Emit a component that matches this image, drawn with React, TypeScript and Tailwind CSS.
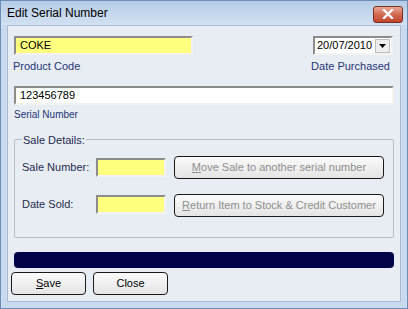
const inputSunken =
  "border-2 border-t-[#8c8c8c] border-l-[#8c8c8c] border-b-[#f2f2f2] border-r-[#f2f2f2]"

const Btn: React.FC<{ hot: string; rest: string; disabled?: boolean; w: string }> = ({
  hot,
  rest,
  disabled,
  w,
}) => (
  <div
    className={`${w} h-[23px] rounded-[4px] border border-[#1a1a1a] bg-gradient-to-b from-[#fbfbfb] to-[#e4e4e4] flex items-center justify-center text-[11px] ${
      disabled ? "text-[#8f8f8f]" : "text-black"
    }`}
  >
    <span className="underline">{hot}</span>
    <span>{rest}</span>
  </div>
)

export default function App() {
  return (
    <div
      className="w-[408px] h-[309px] bg-[#c9daee] border border-[#6f8db3] flex flex-col"
      style={{ fontFamily: '"Liberation Sans", Arial, sans-serif' }}
    >
      {/* title bar */}
      <div className="h-[24px] shrink-0 flex items-center justify-between pl-[6px] pr-[4px] bg-gradient-to-b from-[#b6cce7] to-[#d2e1f2]">
        <span className="text-[12px] text-black">Edit Serial Number</span>
        <div className="w-[30px] h-[17px] mt-[2px] rounded-[3px] border border-[#7a2e24] bg-gradient-to-b from-[#e9a898] via-[#d36a52] to-[#c2452c] flex items-center justify-center">
          <svg width="12" height="10" viewBox="0 0 12 10">
            <path d="M2 1 L10 9 M10 1 L2 9" stroke="#fff" strokeWidth="2.4" strokeLinecap="square" />
          </svg>
        </div>
      </div>

      {/* client */}
      <div className="mx-[6px] mb-[6px] flex-1 bg-[#e8edf3] border border-[#a9bcd3] px-[6px] pt-[10px] flex flex-col">
        <div className="flex justify-between">
          <div className="flex flex-col">
            <div className={`w-[179px] h-[19px] bg-[#ffff80] ${inputSunken} text-[11px] pl-[4px] leading-[15px] text-black`}>
              COKE
            </div>
            <span className="text-[11px] text-[#1f3577] mt-[3px] ml-[-1px]">Product Code</span>
          </div>
          <div className="flex flex-col items-end mr-[1px]">
            <div className={`w-[80px] h-[19px] bg-white ${inputSunken} flex items-center justify-between pl-[2px] pr-[1px]`}>
              <span className="text-[11px] text-black">20/07/2010</span>
              <div className="w-[15px] h-[14px] bg-[#eeeeee] border border-[#bdbdbd] flex items-center justify-center">
                <svg width="7" height="4" viewBox="0 0 7 4">
                  <path d="M0 0 H7 L3.5 4 Z" fill="#000" />
                </svg>
              </div>
            </div>
            <span className="text-[11px] text-[#1f3577] mt-[3px] mr-[3px]">Date Purchased</span>
          </div>
        </div>

        <div className={`mt-[11px] w-[380px] h-[19px] bg-white ${inputSunken} text-[11px] pl-[4px] leading-[15px] text-black`}>
          123456789
        </div>
        <span className="text-[10px] text-[#1f3577] mt-[2px]">Serial Number</span>

        <fieldset className="mt-[10px] w-[380px] h-[106px] border border-[#b5bcc6] rounded-[2px] pl-[7px] pr-[9px]">
          <legend className="text-[11px] text-[#1e2c50] px-[1px]">Sale Details:</legend>
          <div className="flex items-center mt-[8px]">
            <span className="w-[74px] text-[11px] text-[#1e2c50]">Sale Number:</span>
            <div className={`w-[70px] h-[19px] bg-[#ffff80] ${inputSunken}`} />
            <div className="ml-[8px]">
              <Btn hot="M" rest="ove Sale to another serial number" disabled w="w-[210px]" />
            </div>
          </div>
          <div className="flex items-center mt-[12px]">
            <span className="w-[74px] text-[11px] text-[#1e2c50]">Date Sold:</span>
            <div className={`w-[70px] h-[19px] bg-[#ffff80] ${inputSunken}`} />
            <div className="ml-[8px] mt-[3px]">
              <Btn hot="R" rest="eturn Item to Stock & Credit Customer" disabled w="w-[210px]" />
            </div>
          </div>
        </fieldset>

        <div className="mt-[14px] w-[380px] h-[16px] rounded-[4px] bg-[#03034a]" />

        <div className="mt-[4px] ml-[-3px] flex gap-[7px]">
          <Btn hot="S" rest="ave" w="w-[75px]" />
          <Btn hot="" rest="Close" w="w-[75px]" />
        </div>
      </div>
    </div>
  )
}
